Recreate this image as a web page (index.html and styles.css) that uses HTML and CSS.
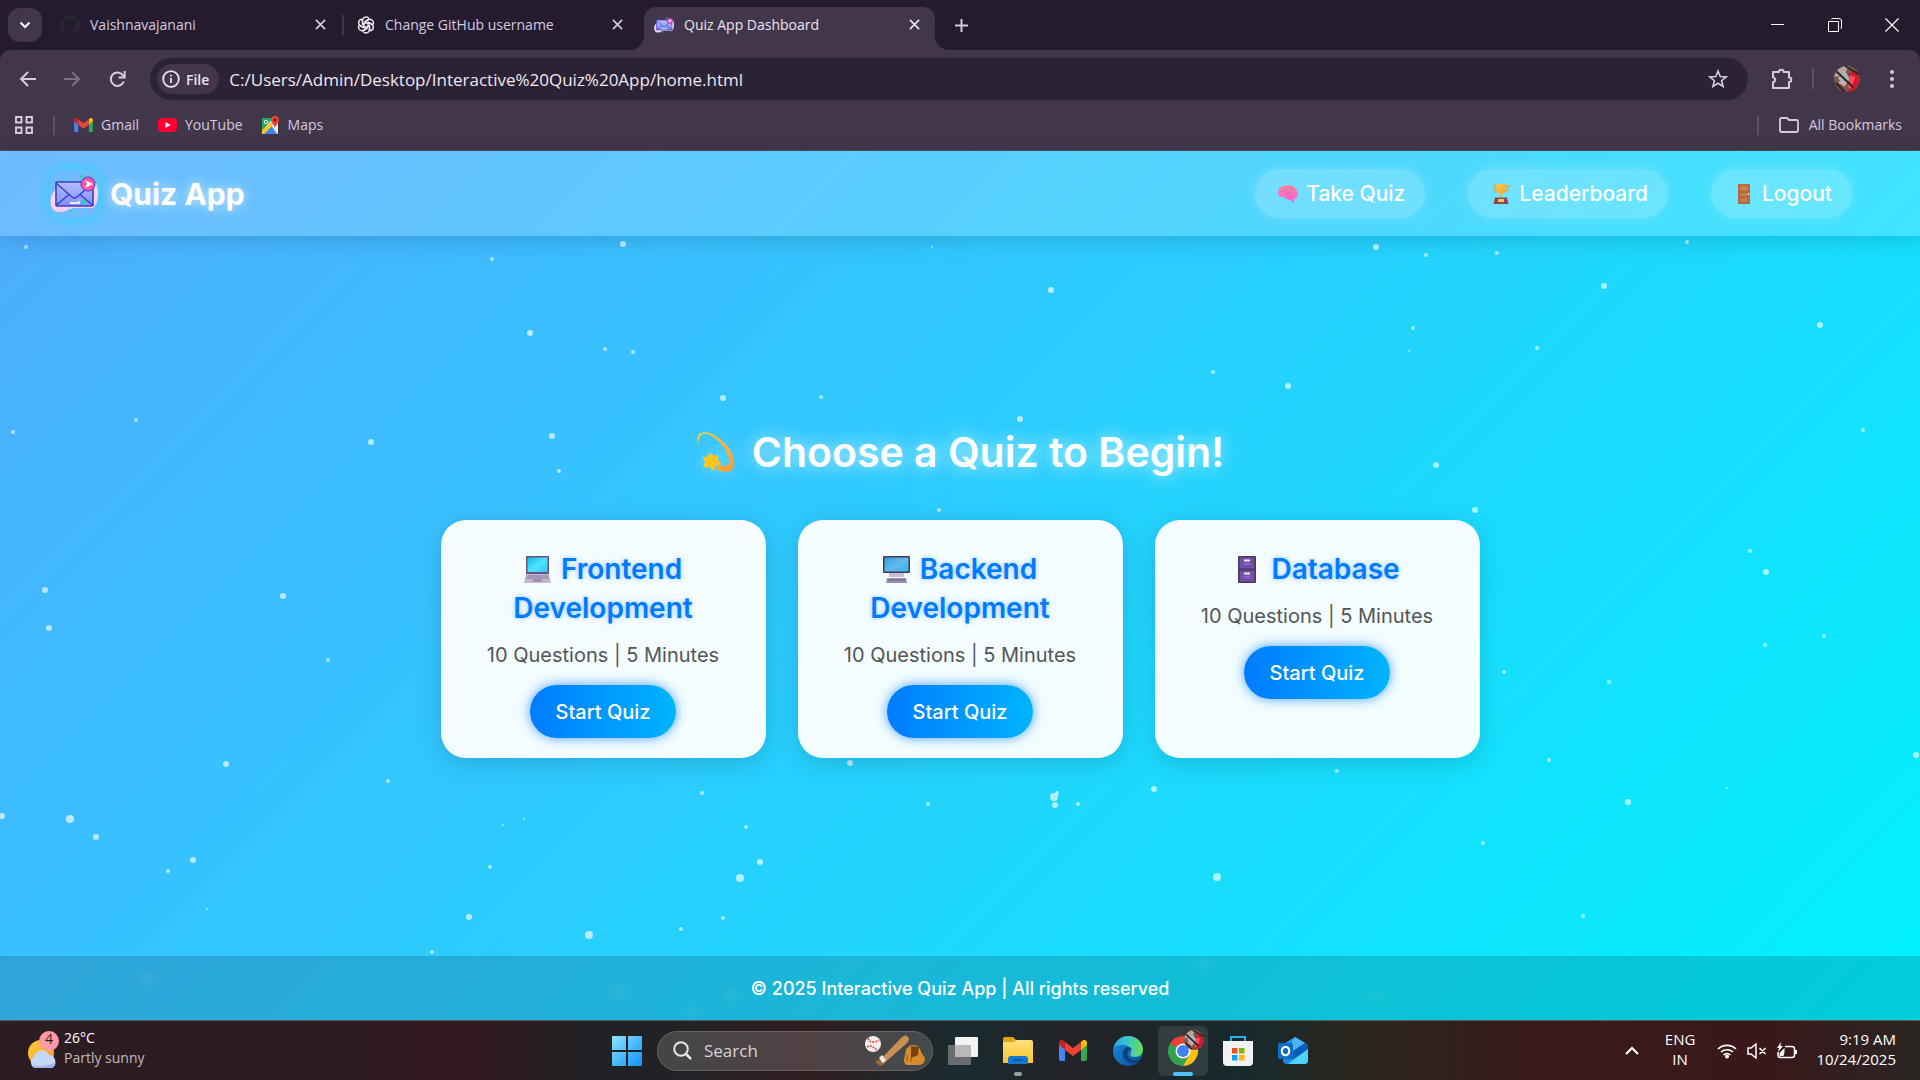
FILE: index.html
```html
<!DOCTYPE html>
<html lang="en">
<head>
<meta charset="utf-8">
<meta name="viewport" content="width=device-width, initial-scale=1">
<title>Quiz App Dashboard</title>
<link rel="stylesheet" href="styles.css">
</head>
<body>
<svg class="defs" width="0" height="0" aria-hidden="true">
  <defs>
    <linearGradient id="env" x1="0" y1="0" x2="0" y2="1"><stop offset="0" stop-color="#b4bcff"/><stop offset="1" stop-color="#8090ff"/></linearGradient>
    <linearGradient id="gold" x1="0" y1="0" x2="1" y2="1"><stop offset="0" stop-color="#ffce30"/><stop offset="1" stop-color="#f79a3c"/></linearGradient>
    <linearGradient id="brain" x1="0" y1="0" x2="0" y2="1"><stop offset="0" stop-color="#f48a9c"/><stop offset="1" stop-color="#ff62e0"/></linearGradient>
    <linearGradient id="screen" x1="0" y1="0" x2="1" y2="1"><stop offset="0" stop-color="#17b0ee"/><stop offset=".5" stop-color="#4ae6ff"/><stop offset="1" stop-color="#3cc4f5"/></linearGradient>
    <linearGradient id="screen2" x1="0" y1="0" x2="1" y2="1"><stop offset="0" stop-color="#2f9fe0"/><stop offset=".5" stop-color="#64b8ee"/><stop offset="1" stop-color="#30b9e6"/></linearGradient>
    <linearGradient id="win" x1="0" y1="0" x2="1" y2="1"><stop offset="0" stop-color="#8fe3ff"/><stop offset="1" stop-color="#0d93fa"/></linearGradient>
    <linearGradient id="folder" x1="0" y1="0" x2="0" y2="1"><stop offset="0" stop-color="#ffe07a"/><stop offset="1" stop-color="#fdc52f"/></linearGradient>
    <linearGradient id="edgeTop" x1="0" y1="0" x2="1" y2="0"><stop offset="0" stop-color="#2fa6e8"/><stop offset=".5" stop-color="#38c8c8"/><stop offset="1" stop-color="#72e04c"/></linearGradient>
    <linearGradient id="edgeLow" x1="0" y1="0" x2="1" y2="1"><stop offset="0" stop-color="#1a8fe0"/><stop offset="1" stop-color="#0b4a93"/></linearGradient>
    <symbol id="mail" viewBox="0 0 48 48">
      <path d="M5 20C-2 27-1 42 9 42c8 0 10-4 16-4h18c6-4 6-20 3-24-2-4-6-3-9 2z" fill="#f9d3ee"/>
      <rect x="6" y="12" width="37" height="24" rx="1" fill="url(#env)" stroke="#3b3fc8" stroke-width="1.600"/>
      <path d="M6 13l16 14q2.500 2 5 0L43 13M6 35.500l13-11M43 35.500l-13-11" fill="none" stroke="#3b3fc8" stroke-width="1.500"/>
      <path d="M20 33h9v-2" fill="none" stroke="#e8ecff" stroke-width="1.800"/>
      <circle cx="33.500" cy="32" r="2" fill="#19d9a5"/><circle cx="31" cy="6" r="1.500" fill="#19d9a5"/><circle cx="21" cy="41" r="1.300" fill="#19d9a5"/><circle cx="41" cy="40" r="1" fill="#ff5fa2"/><circle cx="27" cy="8" r="1" fill="#ff7fc0"/>
      <circle cx="38" cy="14" r="7" fill="#ff55a5" stroke="#3b3fc8" stroke-width="1"/><path d="M35 10l8 4-8 4 2-4z" fill="#fff"/>
    </symbol>
    <symbol id="gmail" viewBox="0 0 28 21">
      <path d="M0 3v16q0 2 2 2h4V8z" fill="#4285f4"/><path d="M28 3v16q0 2-2 2h-4V8z" fill="#34a853"/>
      <path d="M22 2v8l6-5V3c0-3-3-4-5-2z" fill="#fbbc04"/><path d="M6 2v8L0 5V3c0-3 3-4 5-2z" fill="#c5221f"/><path d="M6 2l8 6 8-6v8l-8 6-8-6z" fill="#ea4335"/>
    </symbol>
    <symbol id="close" viewBox="0 0 12 12"><path d="M1 1l10 10M11 1L1 11" fill="none" stroke="currentColor" stroke-width="1.800"/></symbol>
    <symbol id="photo" viewBox="0 0 26 26">
      <clipPath id="round"><circle cx="13" cy="13" r="13"/></clipPath>
      <g clip-path="url(#round)"><rect width="26" height="26" fill="#75594f"/><path d="M0 0h15l-5 9-10 2z" fill="#b8a79c"/><path d="M4 12l7-7 5 8-6 8z" fill="#a9b6bd"/><path d="M14 7l8-2 4 8-4 13h-9l4-8z" fill="#c91d2b"/><path d="M16 9l5 2-3 10-4 2z" fill="#ff4b54"/><path d="M2 17l9 9M11 0l15 9M2 5l17 16" stroke="#3a1d1c" stroke-width="2"/><path d="M5 16l6 3" stroke="#e7a3a6" stroke-width="2"/></g>
    </symbol>
  </defs>
</svg>

<header class="browser">
  <div class="tabs">
    <button class="tab-search" aria-label="Search tabs"><svg width="12" height="8" viewBox="0 0 12 8"><path d="M1.500 1.500L6 6l4.500-4.500" fill="none" stroke="currentColor" stroke-width="2"/></svg></button>
    <div class="tab">
      <svg width="20" height="20" viewBox="0 0 16 16"><path fill="#24292e" d="M8 0C3.580 0 0 3.580 0 8c0 3.540 2.290 6.530 5.470 7.590.4.070.550-.170.550-.380v-1.340c-2.230.490-2.700-1.070-2.700-1.070-.360-.920-.890-1.170-.890-1.170-.730-.500.050-.490.050-.490.810.060 1.230.830 1.230.830.720 1.230 1.870.870 2.330.660.070-.520.280-.870.510-1.070-1.780-.200-3.640-.890-3.640-3.950 0-.870.310-1.590.820-2.150-.080-.200-.360-1.020.080-2.120 0 0 .670-.210 2.200.820a7.600 7.600 0 0 1 4 0c1.530-1.040 2.200-.820 2.200-.820.440 1.100.160 1.920.080 2.120.510.560.820 1.270.820 2.150 0 3.070-1.870 3.750-3.650 3.950.290.250.540.730.540 1.480v2.200c0 .210.150.460.550.380A8 8 0 0 0 8 0z"/></svg>
      <span class="tab-title">Vaishnavajanani</span>
      <button class="icon-btn" aria-label="Close tab"><svg width="11" height="11"><use href="#close"/></svg></button>
    </div>
    <div class="tab divided">
      <svg width="18" height="18" viewBox="0 0 24 24"><g fill="none" stroke="#f3eef7" stroke-width="1.800"><path id="petal" d="M12.500 8.500L7.500 11.500V6a4.600 4.600 0 0 1 8.600-2.300M11 7l5-2.900"/><use href="#petal" transform="rotate(60 12 12)"/><use href="#petal" transform="rotate(120 12 12)"/><use href="#petal" transform="rotate(180 12 12)"/><use href="#petal" transform="rotate(240 12 12)"/><use href="#petal" transform="rotate(300 12 12)"/></g></svg>
      <span class="tab-title">Change GitHub username</span>
      <button class="icon-btn" aria-label="Close tab"><svg width="11" height="11"><use href="#close"/></svg></button>
    </div>
    <div class="tab active">
      <svg width="20" height="20"><use href="#mail"/></svg>
      <span class="tab-title">Quiz App Dashboard</span>
      <button class="icon-btn" aria-label="Close tab"><svg width="11" height="11"><use href="#close"/></svg></button>
    </div>
    <button class="icon-btn new-tab" aria-label="New tab"><svg width="13" height="13" viewBox="0 0 13 13"><path d="M6.500 0v13M0 6.500h13" stroke="currentColor" stroke-width="2"/></svg></button>
    <div class="window-controls">
      <button class="icon-btn" aria-label="Minimize"><svg width="13" height="13" viewBox="0 0 13 13"><path d="M0 5.500h13" stroke="#fff"/></svg></button>
      <button class="icon-btn" aria-label="Restore"><svg width="14" height="14" viewBox="0 0 14 14"><path d="M.5 3.500h10v10H.5zM3 1.500q.5-1 2-1h6q2.500 0 2.500 2.500v6q0 1.500-1 2" fill="none" stroke="#fff"/></svg></button>
      <button class="icon-btn" aria-label="Close"><svg width="14" height="14" viewBox="0 0 14 14"><path d="M.5.5l13 13M13.500.5l-13 13" stroke="#fff" stroke-width="1.200"/></svg></button>
    </div>
  </div>

  <div class="toolbar">
    <button class="icon-btn" aria-label="Back"><svg width="17" height="16" viewBox="0 0 17 16"><path d="M17 8H2M9 1L2 8l7 7" fill="none" stroke="currentColor" stroke-width="2"/></svg></button>
    <button class="icon-btn dim" aria-label="Forward"><svg width="17" height="16" viewBox="0 0 17 16"><path d="M0 8h15M8 1l7 7-7 7" fill="none" stroke="currentColor" stroke-width="2"/></svg></button>
    <button class="icon-btn" aria-label="Reload"><svg width="17" height="17" viewBox="0 0 17 17"><path d="M14.800 10.500a6.700 6.700 0 1 1-.8-6.200L15.500 6M15.700 0v6.500H9.500" fill="none" stroke="currentColor" stroke-width="2"/></svg></button>
    <div class="omnibox">
      <button class="chip"><svg width="18" height="18" viewBox="0 0 18 18"><circle cx="9" cy="9" r="7.800" fill="none" stroke="currentColor" stroke-width="1.800"/><path d="M9 8v5M9 4.800v1.800" stroke="currentColor" stroke-width="1.800"/></svg>File</button>
      <input class="url" type="text" aria-label="Address" value="C:/Users/Admin/Desktop/Interactive%20Quiz%20App/home.html">
      <button class="icon-btn" aria-label="Bookmark this page"><svg width="20" height="20" viewBox="0 0 20 20"><path d="M10 2l2.200 5.500 6 .4-4.600 3.800 1.500 5.800L10 14.300l-5.100 3.200 1.500-5.800L1.800 7.900l6-.4z" fill="none" stroke="currentColor" stroke-width="1.600"/></svg></button>
    </div>
    <button class="icon-btn" aria-label="Extensions"><svg width="22" height="22" viewBox="0 0 22 22"><path d="M2 4h6a2.300 2.300 0 0 1 4.600 0H18v5.400a2.300 2.300 0 0 1 0 4.600v6H2v-5.700a2.600 2.600 0 0 0 0-5.100z" fill="none" stroke="currentColor" stroke-width="2" stroke-linejoin="round"/></svg></button>
    <span class="rule"></span>
    <button class="icon-btn" aria-label="Profile"><svg width="26" height="26"><use href="#photo"/></svg></button>
    <button class="icon-btn" aria-label="Menu"><svg width="4" height="18" viewBox="0 0 4 18"><g fill="currentColor"><circle cx="2" cy="2" r="2"/><circle cx="2" cy="9" r="2"/><circle cx="2" cy="16" r="2"/></g></svg></button>
  </div>

  <nav class="bookmarks" aria-label="Bookmarks">
    <button class="icon-btn apps" aria-label="Apps"><svg width="18" height="18" viewBox="0 0 18 18"><path d="M1 1h5.500v5.500H1zM11.500 1H17v5.500h-5.500zM1 11.500h5.500V17H1zM11.500 11.500H17V17h-5.500z" fill="none" stroke="currentColor" stroke-width="1.900"/></svg></button>
    <span class="rule"></span>
    <a href="#"><svg width="19" height="14"><use href="#gmail"/></svg>Gmail</a>
    <a href="#"><svg width="19" height="14" viewBox="0 0 19 14"><rect width="19" height="14" rx="4" fill="#f03"/><path d="M7.500 4l5 3-5 3z" fill="#fff"/></svg>YouTube</a>
    <a href="#"><svg width="18" height="18" viewBox="0 0 18 18"><rect y="2" width="16" height="16" rx="1" fill="#e9edf0"/><path d="M0 3q0-1 1-1h10L0 15z" fill="#22a565"/><path d="M1 18L9 9l6 9z" fill="#4285f4"/><path d="M0 14L9 6l2 3-9 9H0z" fill="#fbc91f"/><circle cx="4" cy="6" r="1.700" fill="none" stroke="#fff"/><path d="M13 0a4 4 0 0 1 4 4c0 3-3 4-4 8-1-4-4-5-4-8a4 4 0 0 1 4-4z" fill="#e94335"/><circle cx="13" cy="4" r="1.400" fill="#811411"/></svg>Maps</a>
    <span class="rule push"></span>
    <a class="all" href="#"><svg width="20" height="16" viewBox="0 0 20 16"><path d="M2.500 1H8l2 2h7.500Q19 3 19 4.500v9q0 1.500-1.500 1.500h-15Q1 15 1 13.500v-11Q1 1 2.500 1z" fill="none" stroke="currentColor" stroke-width="1.800"/></svg>All Bookmarks</a>
  </nav>
</header>

<div class="app">
  <svg class="stars" viewBox="0 151 1920 869" preserveAspectRatio="xMidYMid slice" aria-hidden="true">
    <g class="small"><circle cx="26" cy="247" r="2"/><circle cx="492" cy="259" r="2"/><circle cx="932" cy="247" r="1"/><circle cx="1426" cy="255" r="2"/><circle cx="1497" cy="253" r="2"/><circle cx="1687" cy="242" r="2"/><circle cx="605" cy="349" r="2"/><circle cx="633" cy="352" r="2"/><circle cx="1413" cy="328" r="2"/><circle cx="1409" cy="351" r="1"/><circle cx="1537" cy="348" r="2"/><circle cx="1213" cy="372" r="2"/><circle cx="821" cy="397" r="2"/><circle cx="136" cy="420" r="2"/><circle cx="13" cy="432" r="2"/><circle cx="559" cy="471" r="2"/><circle cx="1863" cy="430" r="2"/><circle cx="939" cy="510" r="2"/><circle cx="328" cy="660" r="2"/><circle cx="1504" cy="672" r="2"/><circle cx="1609" cy="682" r="2"/><circle cx="1750" cy="551" r="2"/><circle cx="1824" cy="636" r="2"/><circle cx="1765" cy="645" r="2"/><circle cx="388" cy="781" r="2"/><circle cx="702" cy="793" r="2"/><circle cx="524" cy="819" r="1"/><circle cx="503" cy="825" r="1"/><circle cx="746" cy="827" r="2"/><circle cx="928" cy="804" r="2"/><circle cx="1078" cy="804" r="2"/><circle cx="1057" cy="793" r="2"/><circle cx="1337" cy="771" r="2"/><circle cx="1549" cy="760" r="2"/><circle cx="1727" cy="788" r="1"/><circle cx="1483" cy="843" r="2"/><circle cx="490" cy="867" r="2"/><circle cx="168" cy="871" r="2"/><circle cx="207" cy="909" r="1"/><circle cx="723" cy="918" r="2"/><circle cx="681" cy="929" r="2"/><circle cx="1583" cy="916" r="2"/><circle cx="432" cy="952" r="2"/></g>
    <g class="big"><circle cx="623" cy="244" r="3"/><circle cx="1376" cy="247" r="3"/><circle cx="1051" cy="290" r="3"/><circle cx="1604" cy="286" r="3"/><circle cx="1820" cy="325" r="3"/><circle cx="530" cy="333" r="3"/><circle cx="1288" cy="386" r="3"/><circle cx="723" cy="398" r="3"/><circle cx="1020" cy="419" r="3"/><circle cx="371" cy="442" r="3"/><circle cx="552" cy="436" r="3"/><circle cx="1436" cy="465" r="3"/><circle cx="1475" cy="510" r="3"/><circle cx="45" cy="590" r="3"/><circle cx="283" cy="596" r="3"/><circle cx="49" cy="628" r="3"/><circle cx="1766" cy="572" r="3"/><circle cx="226" cy="764" r="3"/><circle cx="850" cy="763" r="3"/><circle cx="1054" cy="797" r="4"/><circle cx="1055" cy="805" r="3"/><circle cx="1154" cy="789" r="3"/><circle cx="1628" cy="802" r="3"/><circle cx="1916" cy="755" r="3"/><circle cx="2" cy="816" r="3"/><circle cx="70" cy="819" r="4"/><circle cx="96" cy="837" r="3"/><circle cx="193" cy="860" r="3"/><circle cx="760" cy="862" r="3"/><circle cx="740" cy="878" r="4"/><circle cx="1217" cy="877" r="4"/><circle cx="469" cy="917" r="3"/><circle cx="589" cy="935" r="4"/></g>
    <g class="faint"><circle cx="146" cy="979" r="8"/><circle cx="620" cy="992" r="9"/><circle cx="692" cy="1012" r="7"/><circle cx="732" cy="995" r="8"/><circle cx="1204" cy="964" r="7"/><circle cx="1376" cy="998" r="8"/></g>
  </svg>

  <header class="site-header">
    <a class="brand" href="#"><svg class="logo" width="48" height="48"><use href="#mail"/></svg>Quiz App</a>
    <nav class="site-nav" aria-label="Main">
      <a class="pill" href="#"><svg width="20" height="20" viewBox="0 0 20 20"><path d="M0 9C0 4 4 1 9 1c6 0 11 4 11 9 0 3-2 5-4 5v3.500h-2.500L13 16c-3 0-5-1-7-3-4 0-6-1-6-4z" fill="url(#brain)"/><path d="M3 8c2-3 5 0 6-4M8 10c2-2 4 1 6-2M12 4c2 0 3 1 3 3M9 13c2 0 5 0 8-2" fill="none" stroke="#d650a5" stroke-opacity=".7"/></svg>Take Quiz</a>
      <a class="pill" href="#"><svg width="20" height="20" viewBox="0 0 20 20"><path d="M6 2H2.800q0 5 4 6M14 2h3.200q0 5-4 6" fill="none" stroke="#e9a23b" stroke-width="1.500"/><path d="M5.500 0h9c0 6-.5 9-3.500 10v3H9v-3c-3-1-3.500-4-3.500-10z" fill="url(#gold)"/><path d="M4 13.500h12l1.500 6.500h-15z" fill="#8a4858"/><rect x="7" y="15" width="6" height="3" fill="#f5c04d"/></svg>Leaderboard</a>
      <a class="pill" href="#"><svg width="20" height="20" viewBox="0 0 20 20"><path d="M4 0h12v20H4z" fill="#b96a42"/><path d="M6 2h8v5H6zM6 9h8v3H6zM6 14h8v4H6z" fill="#cf8257" stroke="#b0643f" stroke-width=".8"/><circle cx="14.500" cy="10" r="1" fill="#ffd37a"/></svg>Logout</a>
    </nav>
  </header>

  <main class="main">
    <h1 class="headline"><svg width="40" height="42" viewBox="0 0 40 42"><path d="M2.500 14C-1 5 4-1 13 2 26 6 40 22 38 34c-1 8-10 9-18 4l2-5c6 3 10 3 11-1C35 22 22 6 11 3 5 2 2 6 2.500 14z" fill="url(#gold)"/><path d="M14 22l4 3.500 4-.8-.5 4.300 3.500 4-5 .5-2.500 6-3.500-4-6.500.5 2-5-2.500-5 5 .5z" fill="#ffc51c" stroke="#ffc51c" stroke-linejoin="round"/></svg>Choose a Quiz to Begin!</h1>
    <div class="cards">
      <article class="card">
        <h2><svg width="27" height="27" viewBox="0 0 27 27"><path d="M2 0h23v18H2z" fill="#6a5484"/><path d="M3.500 1.500h20V16h-20z" fill="url(#screen)"/><path d="M2 18h23l2 9H0z" fill="#c3b9cf"/><path d="M3 20h21M2.500 22h22" stroke="#85799b"/><path d="M9 24.500h9" stroke="#8f83a4" stroke-width="2"/></svg> Frontend Development</h2>
        <p>10 Questions | 5 Minutes</p>
        <button class="start">Start Quiz</button>
      </article>
      <article class="card">
        <h2><svg width="27" height="27" viewBox="0 0 27 27"><rect width="27" height="17" rx="1" fill="#433952"/><path d="M1.500 1.500h24v14h-24z" fill="url(#screen2)"/><path d="M6 17h15v4H6z" fill="#c9c0d6"/><path d="M4 22h19l1 5H3z" fill="#9a8fae"/><path d="M5 24h17" stroke="#6d6184"/></svg> Backend Development</h2>
        <p>10 Questions | 5 Minutes</p>
        <button class="start">Start Quiz</button>
      </article>
      <article class="card">
        <h2><svg width="27" height="27" viewBox="0 0 27 27"><rect x="4" width="18" height="27" rx="1" fill="#4d3668"/><path d="M5.500 1.500h15v11h-15zM5.500 14.500h15v11h-15z" fill="#6f51a0"/><path d="M10 4.500h6M10 17.500h6" stroke="#efe6ff" stroke-width="2"/><path d="M9.500 8h7M9.500 21h7" stroke="#9a63e8" stroke-width="1.500"/></svg> Database</h2>
        <p>10 Questions | 5 Minutes</p>
        <button class="start">Start Quiz</button>
      </article>
    </div>
  </main>

  <footer class="site-footer">© 2025 Interactive Quiz App | All rights reserved</footer>
</div>

<footer class="taskbar">
  <div class="weather">
    <svg width="31" height="38" viewBox="0 0 31 38"><circle cx="13" cy="22" r="13" fill="url(#gold)"/><path d="M7 37a6 6 0 0 1-1-11 8 8 0 0 1 15-2 7 7 0 0 1 3 13z" fill="#c6d8f8"/><path d="M5 34q10 3 22-2-1 5-4 5H7z" fill="#9bb4ec"/><circle cx="21" cy="10" r="10" fill="#ff99a4"/></svg>
    <span class="badge">4</span>
    <div class="lines"><span>26°C</span><span class="muted">Partly sunny</span></div>
  </div>
  <div class="dock">
    <button class="tile" aria-label="Start"><svg width="30" height="30" viewBox="0 0 30 30"><path d="M1 0h13v14H0V1q0-1 1-1zM16 0h13q1 0 1 1v13H16zM0 16h14v14H1q-1 0-1-1zM16 16h14v13q0 1-1 1H16z" fill="url(#win)"/></svg></button>
    <div class="search">
      <svg width="19" height="19" viewBox="0 0 19 19"><circle cx="8" cy="8" r="6.800" fill="none" stroke="#e8e5e6" stroke-width="2"/><path d="M13 13l5 5" stroke="#e8e5e6" stroke-width="2.500"/></svg>
      <input type="text" aria-label="Search" placeholder="Search">
      <svg width="60" height="31" viewBox="0 0 60 31"><circle cx="8" cy="9" r="8" fill="#f2eeee"/><path d="M3 3q1 4 5 4t6-2M2 12q4-2 6 0t5 3" fill="none" stroke="#e54b36" stroke-width="1.500" stroke-dasharray="2 1"/><path d="M13 27L37 2q4-3 6 0t-1 6L17 30z" fill="#c99152"/><path d="M14 24l4 5-3 2-5-4z" fill="#9c6833"/><path d="M14 23l3-3 4 5-3 3z" fill="#eee"/><path d="M41 14l5-4q9-1 10 7l4 6q0 7-6 7H42q-3-1-3-5z" fill="#d68c28"/><path d="M46 11l8 1-1 8-7 3z" fill="#7a4213"/><path d="M42 20v6M46 23v4" stroke="#93581b"/></svg>
    </div>
    <button class="tile" aria-label="Task view"><svg width="30" height="28" viewBox="0 0 30 28"><rect y="8" width="23" height="20" rx="1" fill="#6c6c6e"/><rect x="7" width="23" height="20" rx="1" fill="#f3f3f3"/><path d="M7 8h16v12H7z" fill="#b9b9ba"/></svg></button>
    <button class="tile open" aria-label="File Explorer"><svg width="30" height="27" viewBox="0 0 30 27"><path d="M0 2q0-2 2-2h8l3 3v5H0z" fill="#e2a610"/><path d="M0 5h11l2-2h15q2 0 2 2v21H0z" fill="url(#folder)"/><path d="M5 27v-5q0-3 3-3h14q3 0 3 3v5z" fill="#1479d0"/><path d="M10 23h10" stroke="#0a5aa5" stroke-width="2"/></svg></button>
    <button class="tile" aria-label="Gmail"><svg width="28" height="21"><use href="#gmail"/></svg></button>
    <button class="tile" aria-label="Edge"><svg width="30" height="30" viewBox="0 0 30 30"><circle cx="15" cy="15" r="15" fill="url(#edgeLow)"/><path d="M1 11C3 4 9 0 15 0c9 0 15 7 15 13 0 5-3 8-8 8-4 0-6-2-4-4 2-6-6-9-10-8-3 0-5 1-7 2z" fill="url(#edgeTop)"/><path d="M11 13c-4 7 2 15 11 14 2 0 4-2 6-4-4 2-9 2-12-1-2-2-2-5 0-8 2-2 3-1 3 1 1-4-6-5-8-2z" fill="#0c3f7d"/></svg></button>
    <button class="tile current" aria-label="Chrome"><svg width="36" height="36" viewBox="0 0 36 36"><path d="M15 21L2 13.500a15 15 0 0 1 26 0H15z" fill="#ea4335"/><path d="M15 21l6.500 3.500L15 36A15 15 0 0 1 2 13.500z" fill="#34a34f"/><path d="M15 36l6.500-11.500L15 13.500h13A15 15 0 0 1 15 36z" fill="#fbc116"/><circle cx="15" cy="21" r="7.500" fill="#fff"/><circle cx="15" cy="21" r="6" fill="#3f83f0"/><use href="#photo" x="16" y="0" width="20" height="20"/></svg></button>
    <button class="tile" aria-label="Microsoft Store"><svg width="30" height="30" viewBox="0 0 30 30"><path d="M8 7V1h14v6" fill="none" stroke="#27b1ea" stroke-width="2"/><path d="M0 5h30v21q0 4-4 4H4q-4 0-4-4z" fill="#f2f2f2"/><path d="M9 12h5.500v5.500H9z" fill="#f25022"/><path d="M16 12h5.500v5.500H16z" fill="#7fba00"/><path d="M9 19h5.500v5.500H9z" fill="#00a4ef"/><path d="M16 19h5.500v5.500H16z" fill="#ffb900"/></svg></button>
    <button class="tile" aria-label="Outlook"><svg width="30" height="27" viewBox="0 0 30 27"><path d="M5 7L17 0l13 8v15q0 4-4 4H9q-4 0-4-4z" fill="#1a8ade"/><path d="M9 9L21 2l9 6v6L14 22z" fill="#0b5cb8"/><path d="M14 3l3-3 10 6-14 9z" fill="#4ab4f5"/><path d="M30 12v11q0 4-4 4H10z" fill="#4fd3f7"/><rect y="6" width="15" height="16" rx="1.500" fill="#0f6cc9"/><ellipse cx="7.500" cy="14" rx="3.700" ry="4.200" fill="none" stroke="#fff" stroke-width="2.200"/></svg></button>
  </div>
  <div class="tray">
    <svg width="14" height="9" viewBox="0 0 14 9"><path d="M1 8l6-6 6 6" fill="none" stroke="#fff" stroke-width="2"/></svg>
    <div class="lines lang"><span>ENG</span><span>IN</span></div>
    <div class="status">
      <svg width="20" height="16" viewBox="0 0 20 16"><g fill="none" stroke="#fff" stroke-width="1.600"><path d="M1 6a13 13 0 0 1 18 0M4 9a9 9 0 0 1 12 0M6.500 12a5 5 0 0 1 7 0"/></g><circle cx="10" cy="13.500" r="2" fill="#fff"/></svg>
      <svg width="20" height="16" viewBox="0 0 20 16"><path d="M1 5h3l5-4v14l-5-4H1zM12.500 5l6 6M18.500 5l-6 6" fill="none" stroke="#fff" stroke-width="1.500"/></svg>
      <svg width="20" height="17" viewBox="0 0 20 17"><path d="M8 4.500h7q2.500 0 2.500 2.500v6q0 2.500-2.500 2.500H3.500Q1 15.500 1 13v-3" fill="none" stroke="#fff" stroke-width="1.500"/><path d="M18 8h2v4h-2zM4 0l-.5 4H6l-5 6 1-4H0z" fill="#fff"/><path d="M2.500 11l5-5v4l-1 4h-4z" fill="#fff"/></svg>
    </div>
    <div class="lines clock"><span>9:19 AM</span><span>10/24/2025</span></div>
  </div>
</footer>
</body>
</html>
```
FILE: styles.css
```css
* { box-sizing: border-box; }
body {
  margin: 0;
  min-height: 100vh;
  display: flex;
  flex-direction: column;
  font-family: Inter, sans-serif;
}
button, input { font: inherit; color: inherit; border: 0; padding: 0; background: none; }
a { color: inherit; text-decoration: none; }
h1, h2, p { margin: 0; }
svg { display: block; flex: none; }
.defs { position: absolute; }

/* Browser chrome */
.browser {
  background: #241b2f;
  color: #d6c9e0;
  font-family: "Open Sans", sans-serif;
  font-size: 14px;
}
.icon-btn { display: grid; place-items: center; }
.tabs { display: flex; align-items: flex-end; height: 50px; padding-left: 8px; }
.tab-search {
  width: 34px;
  height: 34px;
  margin: 0 8px 8px 0;
  display: grid;
  place-items: center;
  border-radius: 12px;
  background: #42374a;
  color: #fff;
}
.tab {
  display: flex;
  align-items: center;
  gap: 10px;
  width: 291px;
  height: 43px;
  padding: 0 15px 8px 10px;
  margin-right: 6px;
  position: relative;
}
.tab-title { flex: 1; }
.tab.divided::before {
  content: "";
  position: absolute;
  left: -5px;
  top: 8px;
  width: 2px;
  height: 20px;
  background: #42374a;
}
.tab.active { background: #42374a; border-radius: 12px 12px 0 0; margin-right: 18px; color: #ece3f2; }
.tab.active::before, .tab.active::after {
  content: "";
  position: absolute;
  bottom: 0;
  width: 14px;
  height: 14px;
}
.tab.active::before { left: -14px; background: radial-gradient(circle at 0 0, transparent 14px, #42374a 14px); }
.tab.active::after { right: -14px; background: radial-gradient(circle at 100% 0, transparent 14px, #42374a 14px); }
.new-tab { height: 50px; width: 16px; }
.window-controls { display: flex; height: 50px; margin-left: auto; }
.window-controls .icon-btn { width: 57px; }

.toolbar {
  display: flex;
  align-items: center;
  height: 58px;
  padding: 0 8px 0 7px;
  background: #42374a;
  border-radius: 10px 10px 0 0;
}
.toolbar > .icon-btn { width: 40px; height: 40px; margin-right: 5px; }
.toolbar > .icon-btn.dim { color: #7b6f84; }
.omnibox {
  flex: 1;
  display: flex;
  align-items: center;
  height: 42px;
  margin: 0 14px 0 8px;
  padding: 0 20px 0 7px;
  border-radius: 21px;
  background: #2b2233;
}
.chip {
  display: flex;
  align-items: center;
  gap: 6px;
  height: 30px;
  padding: 0 10px 0 5px;
  margin-right: 10px;
  border-radius: 15px;
  background: #42374a;
  color: #ece3f2;
  font-weight: 600;
}
.url { flex: 1; min-width: 0; font-size: 17px; color: #efe8f4; }
.rule { width: 2px; height: 20px; background: #5c5064; }
.toolbar .rule { margin: 0 13px 0 5px; }
.toolbar > .icon-btn:last-child { margin-right: 0; }

.bookmarks {
  display: flex;
  align-items: center;
  height: 43px;
  padding: 0 18px 9px 15px;
  background: #42374a;
  border-bottom: 1px solid #55495e;
}
.bookmarks a { display: flex; align-items: center; gap: 8px; margin-left: 19px; }
.bookmarks .all { gap: 10px; margin-left: 20px; }
.bookmarks .rule { margin-left: 20px; }
.bookmarks .rule.push { margin-left: auto; }

/* Quiz page */
.app {
  flex: 1;
  display: flex;
  flex-direction: column;
  position: relative;
  background: linear-gradient(135deg, #4facfe, #00f2fe);
  color: #fff;
}
.stars { position: absolute; inset: 0; width: 100%; height: 100%; fill: #fff; }
.stars .small { opacity: .6; }
.stars .big { opacity: .65; }
.stars .faint { opacity: .06; filter: blur(3px); }
.site-header, .main, .site-footer { position: relative; }
.site-header {
  display: flex;
  align-items: center;
  justify-content: space-between;
  height: 85px;
  padding: 0 68px 0 50px;
  background: rgba(255, 255, 255, .18);
  box-shadow: 0 4px 20px rgba(0, 0, 0, .15);
}
.brand {
  display: flex;
  align-items: center;
  gap: 12px;
  font-size: 30px;
  font-weight: 700;
  text-shadow: 0 0 12px rgba(255, 255, 255, .7);
}
.logo { border-radius: 12px; box-shadow: 0 0 12px #1cdcff; }
.site-nav { display: flex; gap: 43px; }
.pill {
  display: flex;
  align-items: center;
  gap: 8px;
  height: 49px;
  padding: 0 20px 0 23px;
  border-radius: 25px;
  background: rgba(255, 255, 255, .2);
  box-shadow: 0 0 12px rgba(255, 255, 255, .2);
  font-size: 21px;
  font-weight: 500;
}
.main {
  flex: 1;
  display: flex;
  flex-direction: column;
  align-items: center;
  justify-content: center;
  padding-bottom: 4px;
}
.headline {
  display: flex;
  align-items: center;
  gap: 16px;
  margin-bottom: 46px;
  font-size: 41px;
  line-height: 44px;
  font-weight: 600;
  text-shadow: 0 0 18px rgba(255, 255, 255, .8);
}
.headline svg { filter: drop-shadow(0 0 9px rgba(255, 255, 255, .4)); }
.cards { display: flex; flex-wrap: wrap; justify-content: center; gap: 32px; }
.card {
  width: 325px;
  padding: 30px 30px 20px;
  border-radius: 25px;
  background: rgba(255, 255, 255, .95);
  box-shadow: 0 5px 25px rgba(0, 0, 0, .15);
  text-align: center;
}
.card h2 {
  font-size: 28px;
  line-height: 39px;
  font-weight: 600;
  color: #007bff;
  text-shadow: 0 0 5px rgba(0, 123, 255, .4);
}
.card h2 svg { display: inline-block; vertical-align: -4px; margin-right: 3px; }
.card p { margin: 12px 0 15px; font-size: 20px; line-height: 30px; color: #555; }
.start {
  height: 53px;
  padding: 0 25px;
  border-radius: 27px;
  background: linear-gradient(90deg, #007bff, #00b4ff);
  box-shadow: 0 0 12px rgba(0, 123, 255, .7);
  color: #fff;
  font-size: 20px;
  font-weight: 500;
}
.site-footer {
  height: 64px;
  display: grid;
  place-items: center;
  background: rgba(0, 0, 0, .15);
  font-size: 18px;
  font-weight: 500;
}

/* Taskbar */
.taskbar {
  display: grid;
  grid-template-columns: 1fr auto 1fr;
  align-items: center;
  height: 60px;
  padding: 0 24px;
  border-top: 1px solid #5d5a5c;
  background: linear-gradient(90deg, #2b1d22, #2e1c20 18%, #34191f 24%, #202226 31%, #232226 36%, #301d20 42%, #1a2b2f 50%, #222328 56%, #18292c 65%, #29261f 70%, #391a1b 80%, #3a181a 92%, #2a2524);
  color: #fff;
  font-family: "Open Sans", sans-serif;
  font-size: 15px;
}
.lines { display: flex; flex-direction: column; line-height: 20px; padding-bottom: 4px; }
.muted { color: #c5bbbe; }
.weather { display: flex; align-items: center; gap: 5px; position: relative; margin-left: 4px; padding-bottom: 2px; font-size: 14px; }
.badge { position: absolute; left: 11px; top: 0; width: 20px; line-height: 22px; text-align: center; color: #222; }
.dock { display: flex; align-items: center; gap: 5px; }
.tile { width: 50px; height: 50px; display: grid; place-items: center; border-radius: 6px; position: relative; }
.tile.current { background: rgba(255, 255, 255, .1); }
.tile.current svg { margin: -6px 0 0 6px; }
.tile.open::after, .tile.current::after {
  content: "";
  position: absolute;
  bottom: 0;
  width: 8px;
  height: 4px;
  border-radius: 2px;
  background: #9a9fa2;
}
.tile.current::after { width: 20px; background: #4cc2ff; }
.search {
  display: flex;
  align-items: center;
  gap: 12px;
  width: 276px;
  height: 40px;
  padding: 0 7px 0 15px;
  border: 1px solid #6a6163;
  border-radius: 20px;
  background: rgba(255, 255, 255, .16);
}
.search input { flex: 1; min-width: 0; font-size: 17px; }
.search input::placeholder { color: #d8d3d5; opacity: 1; }
.tray { display: flex; align-items: center; justify-content: flex-end; }
.lang { margin: 0 22px 0 26px; text-align: center; }
.status { display: flex; align-items: center; gap: 10px; }
.clock { margin-left: 19px; text-align: right; }
```
